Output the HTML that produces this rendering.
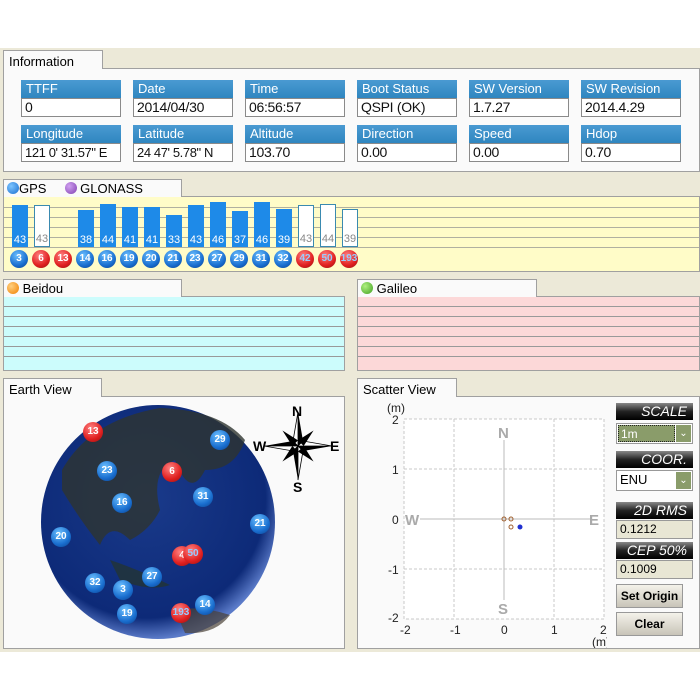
<!DOCTYPE html>
<html><head><style>
*{margin:0;padding:0;box-sizing:border-box}
body{width:700px;height:700px;background:#fff;font-family:"Liberation Sans",sans-serif;position:relative;overflow:hidden}
.a{position:absolute}
.bg{left:0;top:48px;width:700px;height:604px;background:#ece9d8}
.tab{position:absolute;background:#fafafa;border:1px solid #a0a0a0;border-bottom:none;font-size:13px;padding:3px 5px;color:#000;white-space:nowrap}
.panel{position:absolute;border:1px solid #a0a0a0;background:#fafafa}
.lbl{position:absolute;width:100px;height:18px;background:linear-gradient(#4a9ad2,#2f86c0);color:#fff;font-size:13px;padding:1px 5px}
.val{position:absolute;width:100px;height:19px;background:#fff;border:1px solid #8a8a8a;font-size:14px;padding:0 3px;line-height:17px;color:#111;white-space:nowrap;overflow:hidden;letter-spacing:-0.3px}
.bar{position:absolute;width:16px;background:#1e8ae8;color:#fff;font-size:11px;text-align:center}
.bar.n{background:#fff;border:1px solid #3a8ab0;color:#888}
.bar span{position:absolute;bottom:1px;left:0;width:100%}
.c{position:absolute;width:18px;height:18px;border-radius:50%;color:#fff;font-weight:bold;font-size:10px;text-align:center;line-height:18px;font-family:"Liberation Sans Narrow","Liberation Sans",sans-serif}
.b{background:radial-gradient(circle at 40% 30%,#6cc0ff,#1a6fd0 60%,#0a3e8c)}
.r{background:radial-gradient(circle at 40% 30%,#ff8080,#e02020 60%,#901010)}
.hl{position:absolute;height:1px;background:#b0b0a0}
.ctl{position:absolute;left:616px;width:77px;height:17px;background:linear-gradient(#888,#222 50%,#000);color:#fff;font-style:italic;font-size:14px;text-align:right;padding-right:6px;line-height:17px}
.box{position:absolute;left:616px;width:77px;height:19px;background:#e8e6d4;border:1px solid #999;font-size:12px;padding-left:3px;line-height:17px}
.btn{position:absolute;left:616px;width:67px;height:24px;background:linear-gradient(#f4f2ea,#c8c4b8);border:1px solid #999;font-weight:bold;font-size:12px;text-align:center;line-height:22px}
</style></head><body>
<div class="a bg"></div>
<div class="panel" style="left:3px;top:68px;width:697px;height:104px"></div>
<div class="tab" style="left:3px;top:50px;width:100px;height:19px">Information</div>
<div class="lbl" style="left:21px;top:80px">TTFF</div><div class="val" style="left:21px;top:98px">0</div>
<div class="lbl" style="left:133px;top:80px">Date</div><div class="val" style="left:133px;top:98px">2014/04/30</div>
<div class="lbl" style="left:245px;top:80px">Time</div><div class="val" style="left:245px;top:98px">06:56:57</div>
<div class="lbl" style="left:357px;top:80px">Boot Status</div><div class="val" style="left:357px;top:98px">QSPI (OK)</div>
<div class="lbl" style="left:469px;top:80px">SW Version</div><div class="val" style="left:469px;top:98px">1.7.27</div>
<div class="lbl" style="left:581px;top:80px">SW Revision</div><div class="val" style="left:581px;top:98px">2014.4.29</div>
<div class="lbl" style="left:21px;top:125px">Longitude</div><div class="val" style="left:21px;top:143px;font-size:13px;letter-spacing:-0.4px">121 0' 31.57" E</div>
<div class="lbl" style="left:133px;top:125px">Latitude</div><div class="val" style="left:133px;top:143px;font-size:13px;letter-spacing:-0.4px">24 47' 5.78" N</div>
<div class="lbl" style="left:245px;top:125px">Altitude</div><div class="val" style="left:245px;top:143px">103.70</div>
<div class="lbl" style="left:357px;top:125px">Direction</div><div class="val" style="left:357px;top:143px">0.00</div>
<div class="lbl" style="left:469px;top:125px">Speed</div><div class="val" style="left:469px;top:143px">0.00</div>
<div class="lbl" style="left:581px;top:125px">Hdop</div><div class="val" style="left:581px;top:143px">0.70</div>

<div class="panel" style="left:3px;top:196px;width:697px;height:76px;background:#fffcc8"></div>
<div class="hl" style="left:4px;top:207px;width:695px"></div>
<div class="hl" style="left:4px;top:217px;width:695px"></div>
<div class="hl" style="left:4px;top:227px;width:695px"></div>
<div class="hl" style="left:4px;top:237px;width:695px"></div>
<div class="hl" style="left:4px;top:247px;width:695px"></div>
<div class="tab" style="left:3px;top:179px;width:179px;height:18px;padding:1px 3px"><span style="display:inline-block;width:12px;height:12px;border-radius:50%;background:radial-gradient(circle at 35% 35%,#7cc4ff,#1a6fd0);vertical-align:-1px"></span>GPS &nbsp;&nbsp;&nbsp;&nbsp;<span style="display:inline-block;width:12px;height:12px;border-radius:50%;background:radial-gradient(circle at 35% 35%,#d0a0f0,#8040b0);vertical-align:-1px"></span> GLONASS</div>
<div class="bar" style="left:12px;top:205px;height:42px"><span>43</span></div>
<div class="bar n" style="left:34px;top:205px;height:42px"><span>43</span></div>
<div class="bar" style="left:78px;top:210px;height:37px"><span>38</span></div>
<div class="bar" style="left:100px;top:204px;height:43px"><span>44</span></div>
<div class="bar" style="left:122px;top:207px;height:40px"><span>41</span></div>
<div class="bar" style="left:144px;top:207px;height:40px"><span>41</span></div>
<div class="bar" style="left:166px;top:215px;height:32px"><span>33</span></div>
<div class="bar" style="left:188px;top:205px;height:42px"><span>43</span></div>
<div class="bar" style="left:210px;top:202px;height:45px"><span>46</span></div>
<div class="bar" style="left:232px;top:211px;height:36px"><span>37</span></div>
<div class="bar" style="left:254px;top:202px;height:45px"><span>46</span></div>
<div class="bar" style="left:276px;top:209px;height:38px"><span>39</span></div>
<div class="bar n" style="left:298px;top:205px;height:42px"><span>43</span></div>
<div class="bar n" style="left:320px;top:204px;height:43px"><span>44</span></div>
<div class="bar n" style="left:342px;top:209px;height:38px"><span>39</span></div>
<div class="c b" style="left:10px;top:250px">3</div>
<div class="c r" style="left:32px;top:250px">6</div>
<div class="c r" style="left:54px;top:250px">13</div>
<div class="c b" style="left:76px;top:250px">14</div>
<div class="c b" style="left:98px;top:250px">16</div>
<div class="c b" style="left:120px;top:250px">19</div>
<div class="c b" style="left:142px;top:250px">20</div>
<div class="c b" style="left:164px;top:250px">21</div>
<div class="c b" style="left:186px;top:250px">23</div>
<div class="c b" style="left:208px;top:250px">27</div>
<div class="c b" style="left:230px;top:250px">29</div>
<div class="c b" style="left:252px;top:250px">31</div>
<div class="c b" style="left:274px;top:250px">32</div>
<div class="c r" style="left:296px;top:250px;color:#9cf">42</div>
<div class="c r" style="left:318px;top:250px;color:#9cf">50</div>
<div class="c r" style="left:340px;top:250px;color:#9cf">193</div>

<div class="panel" style="left:3px;top:296px;width:342px;height:75px;background:#ccfcfc"></div>
<div class="panel" style="left:357px;top:296px;width:343px;height:75px;background:#fcd8d8"></div>
<div style="position:absolute;left:4px;top:306px;width:340px;height:51px;background:repeating-linear-gradient(#999 0 1px,transparent 1px 10px)"></div>
<div style="position:absolute;left:358px;top:306px;width:341px;height:51px;background:repeating-linear-gradient(#999 0 1px,transparent 1px 10px)"></div>
<div class="tab" style="left:3px;top:279px;width:179px;height:18px;padding:1px 3px"><span style="display:inline-block;width:12px;height:12px;border-radius:50%;background:radial-gradient(circle at 35% 35%,#ffd080,#f08000);vertical-align:-1px"></span> Beidou</div>
<div class="tab" style="left:357px;top:279px;width:180px;height:18px;padding:1px 3px"><span style="display:inline-block;width:12px;height:12px;border-radius:50%;background:radial-gradient(circle at 35% 35%,#b0f080,#40a020);vertical-align:-1px"></span> Galileo</div>

<div class="panel" style="left:3px;top:396px;width:342px;height:253px"></div>
<div class="tab" style="left:3px;top:378px;width:99px;height:19px">Earth View</div>
<svg class="a" style="left:0;top:396px" width="345" height="252" viewBox="0 396 345 252">
<defs><radialGradient id="g" cx="0.45" cy="0.4" r="0.6"><stop offset="0" stop-color="#1a3a8a"/><stop offset="0.85" stop-color="#0d2a78"/><stop offset="1" stop-color="#5a7ac8"/></radialGradient></defs>
<circle cx="158" cy="522" r="117" fill="url(#g)"/>
<path d="M62 470 Q90 420 160 408 Q220 410 245 440 Q235 470 205 470 Q190 500 175 460 Q150 470 160 510 Q150 530 130 540 Q110 520 100 545 Q80 520 62 490Z" fill="#2e3530" opacity="0.8"/>
<path d="M175 610 Q200 605 230 615 Q215 635 185 633Z" fill="#4a4238" opacity="0.7"/>
<path d="M110 560 Q140 570 170 585 Q150 592 120 580Z" fill="#25352a" opacity="0.7"/>
</svg>
<div class="c r" style="left:83px;top:422px;width:20px;height:20px;line-height:20px">13</div>
<div class="c b" style="left:210px;top:430px;width:20px;height:20px;line-height:20px">29</div>
<div class="c b" style="left:97px;top:461px;width:20px;height:20px;line-height:20px">23</div>
<div class="c r" style="left:162px;top:462px;width:20px;height:20px;line-height:20px">6</div>
<div class="c b" style="left:112px;top:493px;width:20px;height:20px;line-height:20px">16</div>
<div class="c b" style="left:193px;top:487px;width:20px;height:20px;line-height:20px">31</div>
<div class="c b" style="left:250px;top:514px;width:20px;height:20px;line-height:20px">21</div>
<div class="c b" style="left:51px;top:527px;width:20px;height:20px;line-height:20px">20</div>
<div class="c r" style="left:172px;top:546px;width:20px;height:20px;line-height:20px">4</div>
<div class="c r" style="left:183px;top:544px;width:20px;height:20px;line-height:20px;color:#9cf">50</div>
<div class="c b" style="left:142px;top:567px;width:20px;height:20px;line-height:20px">27</div>
<div class="c b" style="left:85px;top:573px;width:20px;height:20px;line-height:20px">32</div>
<div class="c b" style="left:113px;top:580px;width:20px;height:20px;line-height:20px">3</div>
<div class="c b" style="left:195px;top:595px;width:20px;height:20px;line-height:20px">14</div>
<div class="c b" style="left:117px;top:604px;width:20px;height:20px;line-height:20px">19</div>
<div class="c r" style="left:171px;top:603px;width:20px;height:20px;line-height:20px;color:#9cf">193</div>
<svg class="a" style="left:250px;top:400px" width="95" height="95" viewBox="0 0 95 95">
<g transform="translate(48,46)">
<polygon points="0,-34 5,-5 0,0" fill="#000"/><polygon points="0,-34 -5,-5 0,0" fill="#fff" stroke="#000" stroke-width="0.8"/>
<polygon points="0,34 -5,5 0,0" fill="#000"/><polygon points="0,34 5,5 0,0" fill="#fff" stroke="#000" stroke-width="0.8"/>
<polygon points="34,0 5,5 0,0" fill="#000"/><polygon points="34,0 5,-5 0,0" fill="#fff" stroke="#000" stroke-width="0.8"/>
<polygon points="-34,0 -5,-5 0,0" fill="#000"/><polygon points="-34,0 -5,5 0,0" fill="#fff" stroke="#000" stroke-width="0.8"/>
<g transform="rotate(45)"><polygon points="0,-22 4,-4 -4,-4" fill="#000"/><polygon points="0,22 4,4 -4,4" fill="#000"/><polygon points="22,0 4,4 4,-4" fill="#000"/><polygon points="-22,0 -4,4 -4,-4" fill="#000"/></g>
</g>
<text x="42" y="16" font-family="Liberation Sans" font-weight="bold" font-size="14">N</text>
<text x="43" y="92" font-family="Liberation Sans" font-weight="bold" font-size="14">S</text>
<text x="3" y="51" font-family="Liberation Sans" font-weight="bold" font-size="14">W</text>
<text x="80" y="51" font-family="Liberation Sans" font-weight="bold" font-size="14">E</text>
</svg>

<div class="panel" style="left:357px;top:396px;width:343px;height:253px"></div>
<div class="tab" style="left:357px;top:378px;width:100px;height:19px">Scatter View</div>
<svg class="a" style="left:357px;top:396px" width="250" height="252" viewBox="357 396 250 252">
<rect x="404" y="419" width="200" height="200" fill="#fff"/>
<g stroke="#c8c8c8" stroke-dasharray="3,2" fill="none">
<rect x="404" y="419" width="200" height="200"/>
<line x1="454" y1="419" x2="454" y2="619"/><line x1="554" y1="419" x2="554" y2="619"/>
<line x1="404" y1="469" x2="604" y2="469"/><line x1="404" y1="569" x2="604" y2="569"/>
</g>
<line x1="504" y1="440" x2="504" y2="600" stroke="#bbb"/>
<line x1="420" y1="519" x2="590" y2="519" stroke="#bbb"/>
<g font-family="Liberation Sans" font-weight="bold" font-size="15" fill="#aaa">
<text x="498" y="438">N</text><text x="498" y="614">S</text><text x="405" y="525">W</text><text x="589" y="525">E</text></g>
<g font-family="Liberation Sans" font-size="12" fill="#222">
<text x="387" y="412">(m)</text><text x="392" y="424">2</text><text x="392" y="474">1</text><text x="392" y="524">0</text><text x="388" y="574">-1</text><text x="388" y="622">-2</text>
<text x="400" y="634">-2</text><text x="450" y="634">-1</text><text x="501" y="634">0</text><text x="551" y="634">1</text><text x="600" y="634">2</text><text x="592" y="646">(m)</text></g>
<circle cx="504" cy="519" r="2" fill="none" stroke="#a06030"/><circle cx="511" cy="519" r="2" fill="none" stroke="#a06030"/><circle cx="511" cy="527" r="2" fill="none" stroke="#a06030"/><circle cx="520" cy="527" r="2.5" fill="#2030d0"/>
</svg>
<div class="ctl" style="top:403px">SCALE</div>
<div class="box" style="top:423px;height:21px;background:#fff;padding:1px"><div style="width:57px;height:17px;background:#8a9c6a;border:1px dotted #222;color:#fff;font-size:12px;padding-left:2px">1m</div><div style="position:absolute;right:1px;top:1px;width:15px;height:17px;background:#8a9c6a;color:#fff;font-size:10px;text-align:center">&#8964;</div></div>
<div class="ctl" style="top:451px">COOR.</div>
<div class="box" style="top:470px;height:21px;background:#fff;font-size:13px">ENU<div style="position:absolute;right:1px;top:1px;width:15px;height:17px;background:#8a9c6a;color:#fff;font-size:10px;text-align:center">&#8964;</div></div>
<div class="ctl" style="top:502px">2D RMS</div>
<div class="box" style="top:520px">0.1212</div>
<div class="ctl" style="top:542px">CEP 50%</div>
<div class="box" style="top:560px">0.1009</div>
<div class="btn" style="top:584px">Set Origin</div>
<div class="btn" style="top:612px">Clear</div>
</body></html>
